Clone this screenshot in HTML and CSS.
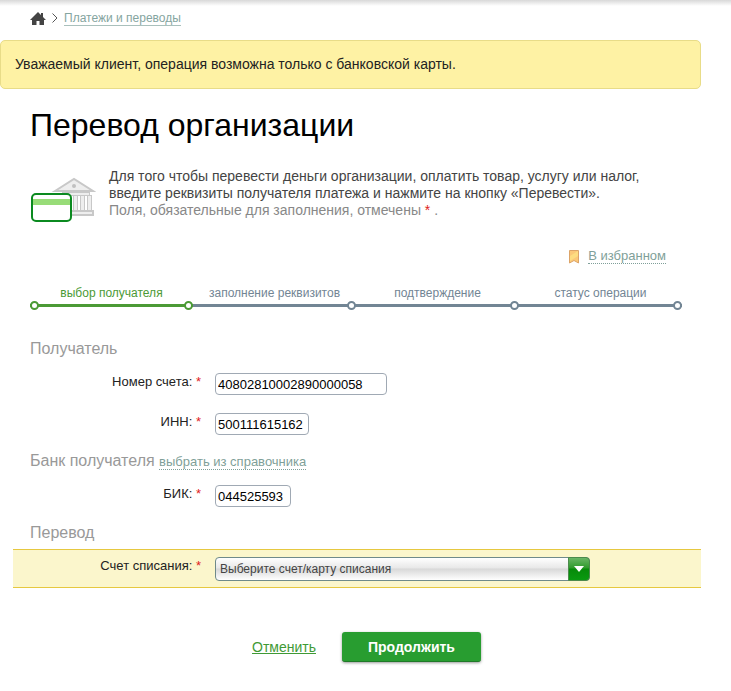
FILE: index.html
```html
<!DOCTYPE html>
<html lang="ru">
<head>
<meta charset="UTF-8">
<meta name="viewport" content="width=device-width, initial-scale=1.0">
<title>Перевод организации</title>
<link rel="stylesheet" href="styles.css">
</head>
<body>
  <main class="page">
    <nav class="breadcrumbs">
      <a href="#" class="home" aria-label="Главная">
        <svg width="16" height="13" viewBox="0 0 16 13"><path fill="#444" d="M8 0 L11 3 V1 H13 V5 L16 8 H14 V13 H9.500 V9 H6.500 V13 H2 V8 H0 Z"/></svg>
      </a>
      <svg width="6" height="10" viewBox="0 0 6 10"><path fill="none" stroke="#555" d="M0.500 0.500 L5 5 L0.500 9.500"/></svg>
      <a href="#" class="crumb">Платежи и переводы</a>
    </nav>

    <div class="alert">Уважаемый клиент, операция возможна только с банковской карты.</div>

    <h1>Перевод организации</h1>

    <div class="intro">
      <svg class="intro-icon" width="66" height="46" viewBox="0 0 66 46">
        <!-- bank -->
        <g fill="#eee" stroke="#c8c8c8">
          <path stroke-width="2" d="M25 14 L44 2 L63 14 Z"/>
          <rect x="32.500" y="15.500" width="27" height="3"/>
          <rect x="43.500" y="18.500" width="4" height="15"/>
          <rect x="50.500" y="18.500" width="4" height="15"/>
          <rect x="57.500" y="18.500" width="4" height="15"/>
          <path stroke-width="2" d="M36 34 H63 V38 H36 Z"/>
          <circle cx="44" cy="9" r="2" fill="#c0c0c0" stroke="none"/>
        </g>
        <!-- card -->
        <rect x="2" y="17" width="39" height="27" rx="4" fill="#fff" stroke="#0b8a20" stroke-width="2"/>
        <rect x="3" y="22" width="37" height="6" fill="#98dc78"/>
      </svg>
      <p>
        Для того чтобы перевести деньги организации, оплатить товар, услугу или налог,<br>
        введите реквизиты получателя платежа и нажмите на кнопку «Перевести».<br>
        <span class="note">Поля, обязательные для заполнения, отмечены <span class="req">*</span> .</span>
      </p>
    </div>

    <div class="favorite">
      <svg width="10" height="14" viewBox="0 0 10 14">
        <path fill="#fbc878" stroke="#dca468" d="M0.500 0.500 H9.500 V13 L5 10.500 L0.500 13 Z"/>
        <path fill="#fddc80" d="M1 6 L9 1 V6 L1 11 Z"/>
      </svg>
      <a href="#" class="dotted">В избранном</a>
    </div>

    <ol class="steps">
      <li class="active">выбор получателя</li>
      <li>заполнение реквизитов</li>
      <li>подтверждение</li>
      <li>статус операции</li>
    </ol>

    <form>
      <h2>Получатель</h2>
      <div class="row">
        <label for="account">Номер счета: <span class="req">*</span></label>
        <input id="account" class="w-account" type="text" value="40802810002890000058">
      </div>
      <div class="row">
        <label for="inn">ИНН: <span class="req">*</span></label>
        <input id="inn" class="w-inn" type="text" value="500111615162">
      </div>

      <h2>Банк получателя <a href="#" class="dotted">выбрать из справочника</a></h2>
      <div class="row">
        <label for="bik">БИК: <span class="req">*</span></label>
        <input id="bik" class="w-bik" type="text" value="044525593">
      </div>

      <h2>Перевод</h2>
      <div class="row highlight">
        <label for="from">Счет списания: <span class="req">*</span></label>
        <div class="select">
          <select id="from">
            <option>Выберите счет/карту списания</option>
          </select>
          <span class="arrow">
            <svg width="10" height="6" viewBox="0 0 10 6"><path fill="#fff" d="M0 0 H10 L5 6 Z"/></svg>
          </span>
        </div>
      </div>

      <div class="actions">
        <a href="#" class="cancel">Отменить</a>
        <button type="submit">Продолжить</button>
      </div>
    </form>
  </main>
</body>
</html>
```
FILE: styles.css
```css
*,
*::before,
*::after {
  box-sizing: border-box;
}

body {
  margin: 0;
  font-family: "Liberation Sans", Arial, sans-serif;
  font-size: 13px;
  color: #222;
  background: #fff linear-gradient(#d8d8d8, #fff) 0 0 / 100% 6px no-repeat;
}

h1, h2, p, ol {
  margin: 0;
  padding: 0;
  font-weight: normal;
}

svg {
  display: block;
}

.page {
  padding: 8px 30px 0;
}

.breadcrumbs {
  display: flex;
  align-items: center;
  gap: 6px;
  height: 20px;
}

.crumb {
  color: #85a5a0;
  font-size: 12px;
  line-height: 14px;
  text-decoration: none;
  border-bottom: 1px solid #a9c0bc;
}

.alert {
  margin: 12px 0 0 -30px;
  padding: 15px 14px;
  border: 1px solid #e8dc88;
  border-radius: 5px;
  background: #fef2a4;
  font-size: 14px;
  line-height: 17px;
}

h1 {
  margin-top: 17px;
  color: #000;
  font-size: 32px;
  line-height: 38px;
}

.intro {
  display: flex;
  gap: 13px;
  margin-top: 24px;
  color: #444;
  font-size: 14px;
  line-height: 17px;
}

.intro-icon {
  flex: none;
  margin-top: 9px;
}

.note {
  color: #888;
}

.req {
  color: #e02020;
}

.dotted {
  color: #7f9f99;
  font-size: 13px;
  line-height: 14px;
  text-decoration: none;
  border-bottom: 1px dotted #7f9f99;
}

.favorite {
  display: flex;
  justify-content: flex-end;
  align-items: center;
  gap: 9px;
  margin: 26px 35px 0 0;
}

/* progress line */
.steps {
  display: grid;
  grid-template-columns: repeat(4, 1fr);
  margin: 21px 19px 0 0;
  list-style: none;
  color: #728594;
  font-size: 12px;
  line-height: 16px;
  text-align: center;
}

.steps li {
  position: relative;
  padding-bottom: 3px;
  border-bottom: 3px solid #728594;
}

.steps li::after,
.steps li:first-child::before {
  content: "";
  position: absolute;
  right: 0;
  bottom: -6px;
  width: 9px;
  height: 9px;
  border: 2px solid #728594;
  border-radius: 50%;
  background: #fff;
}

.steps li:first-child::before {
  right: auto;
  left: 0;
}

.steps .active,
.steps .active::before,
.steps .active::after {
  color: #4b9a35;
  border-color: #4b9a35 !important;
}

form {
  margin-top: 32px;
}

h2 {
  color: #999;
  font-size: 16px;
  line-height: 20px;
}

.row {
  display: flex;
  align-items: flex-start;
  gap: 14px;
}

.row + .row {
  margin-top: 18px;
}

h2 + .row {
  margin-top: 14px;
}

.row + h2 {
  margin-top: 16px;
}

.row label {
  width: 171px;
  line-height: 17px;
  text-align: right;
}

.row input {
  height: 22px;
  padding: 0 2px;
  border: 1px solid #a0a9b4;
  border-radius: 4px;
  background: #fff;
  color: #000;
  font: 13px "Liberation Sans", Arial, sans-serif;
}

.w-account {
  width: 172px;
}

.w-inn {
  width: 94px;
}

.w-bik {
  width: 76px;
}

h2 + .highlight {
  margin: 6px 0 0 -17px;
  padding: 7px 0 6px 17px;
  border-top: 1px solid #e6c840;
  border-bottom: 1px solid #e6c840;
  background: #fbf6cc;
}

.select {
  position: relative;
  width: 375px;
}

.select select {
  display: block;
  width: 100%;
  height: 24px;
  padding: 0 26px 0 4px;
  appearance: none;
  border: 1px solid #6f8a8a;
  border-radius: 4px;
  background: linear-gradient(#fff, #e8e8e8 45%, #d8d8d8 50%, #fff);
  color: #444;
  font: 12px "Liberation Sans", Arial, sans-serif;
}

.arrow {
  position: absolute;
  top: 0;
  right: 0;
  display: flex;
  align-items: center;
  justify-content: center;
  width: 22px;
  height: 24px;
  border: 1px solid #4c8a4c;
  border-radius: 0 4px 4px 0;
  background: linear-gradient(#6ab565, #2f9a2c 45%, #078a0a 50%, #0a9a10);
  pointer-events: none;
}

.actions {
  display: flex;
  justify-content: center;
  align-items: center;
  gap: 26px;
  margin-top: 44px;
  padding: 0 0 30px 2px;
}

.cancel {
  color: #3f9a35;
  font-size: 14px;
}

.actions button {
  width: 139px;
  height: 30px;
  border: 0;
  border-bottom: 1px solid #1f7a28;
  border-radius: 3px;
  background: #289d30;
  box-shadow: 0 1px 3px rgba(0, 0, 0, 0.4);
  color: #fff;
  font: bold 14px "Liberation Sans", Arial, sans-serif;
}
```
